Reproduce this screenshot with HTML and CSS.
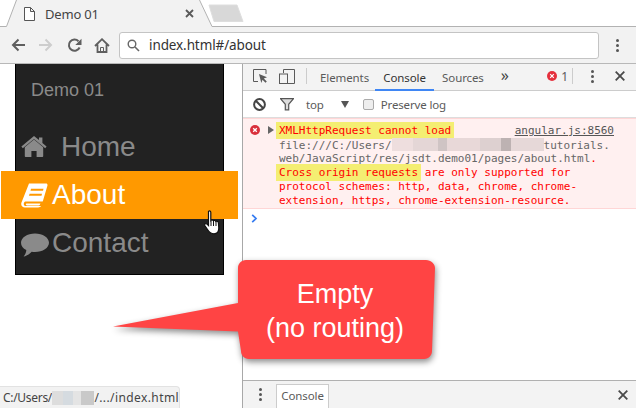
FILE: index.html
```html
<!DOCTYPE html>
<html lang="en">
<head>
<meta charset="utf-8">
<title>Demo 01</title>
<link rel="stylesheet" href="styles.css">
</head>
<body>
<div class="app">
  <header class="tabstrip">
    <svg class="tabshape" width="636" height="27" viewBox="0 0 636 27">
      <path d="M0 26.5H6.5L16.5 0H199.5L212 26.5H636V27H0Z" fill="#f2f2f2"/>
      <path d="M0 26.5H6.5L16.5 0M199.5 0L212 26.5H636" fill="none" stroke="#b2b2b2"/>
      <path d="M209 5H237L243 21.5H214Z" fill="#d8d8d8" stroke="#dedede"/>
    </svg>
    <div class="tab">
      <svg width="11" height="14" viewBox="0 0 11 14"><path d="M.5.5H6.5L10.5 4.5V13.5H.5ZM6.5.5V4.5H10.5" fill="#fff" stroke="#555"/></svg>
      <span class="tab-title">Demo 01</span>
      <svg class="tab-close" width="9" height="9" viewBox="0 0 9 9"><path d="M1 1L8 8M8 1L1 8" stroke="#5a5a5a" stroke-width="1.8"/></svg>
    </div>
  </header>
  <nav class="toolbar">
    <svg width="14" height="14" viewBox="0 0 14 14"><path d="M14 7H2M7.5 1.5L2 7L7.5 12.5" fill="none" stroke="#5f5f5f" stroke-width="2"/></svg>
    <svg width="14" height="14" viewBox="0 0 14 14"><path d="M0 7H12M6.5 1.5L12 7L6.5 12.5" fill="none" stroke="#cdcdcd" stroke-width="2"/></svg>
    <svg width="15" height="15" viewBox="0 0 15 15"><path d="M12.6 9.5A5.6 5.6 0 1 1 11.5 3.2" fill="none" stroke="#5f5f5f" stroke-width="2"/><path d="M14.5 .8V7H8.3Z" fill="#5f5f5f"/></svg>
    <svg class="ic-home" width="16" height="15" viewBox="0 0 16 15"><path d="M1 8L8 1.2L15 8M3.5 6.5V14H12.5V6.5" fill="none" stroke="#5f5f5f" stroke-width="1.8"/><path d="M6.5 14V9.5H9.5V14" fill="none" stroke="#5f5f5f" stroke-width="1"/></svg>
    <div class="omnibox">
      <svg width="13" height="13" viewBox="0 0 13 13"><circle cx="5" cy="5" r="3.8" fill="none" stroke="#666" stroke-width="1.4"/><path d="M8 8L12 12" stroke="#666" stroke-width="1.6"/></svg>
      <span>index.html#/about</span>
    </div>
    <div class="dots dots-menu"><i></i><i></i><i></i></div>
  </nav>
  <div class="stage">
    <main class="viewport">
      <div class="sidebar">
        <div class="brand">Demo 01</div>
        <a class="nav-item nav-home">
          <svg width="26" height="22" viewBox="0 0 26 22"><path fill="currentColor" d="M13 3.6L3.8 11.2V20C3.8 20.6 4.2 21 4.8 21H10.400V15H15.600V21H21.200C21.800 21 22.200 20.600 22.200 20V11.200ZM13 0L.4 10.400L1.800 12.200L13 3L24.200 12.200L25.600 10.400L21.400 6.900V1.400H18V4.100Z"/></svg>
          <span>Home</span>
        </a>
        <a class="nav-item nav-active">
          <svg width="27" height="25" viewBox="0 0 27 25"><path fill="currentColor" d="M8 .5H25C26.200 .5 26.800 1.500 26.400 2.700L20.800 21.800C20.200 23.600 18.800 24.600 17 24.600H4C1.500 24.600 -.4 22.500 .4 19.800Z"/><path fill="#ff9900" d="M3 19.800C3.400 18.900 4 18.600 5 18.600H23L22.400 20.600H6C5 20.600 4.600 21.200 5 21.800C5.200 22.200 5.600 22.400 6 22.400H17.500C18.300 22.400 18.800 22 19 21.500L19.400 20.600H22.400L21.800 22.400C21.600 23 21 23 20 23H4C3 23 2.400 21 3 19.800ZM10 5.800H22.500L22 7.800H9.500ZM8.600 10.800H21L20.500 12.800H8Z"/></svg>
          <span>About</span>
        </a>
        <a class="nav-item nav-contact">
          <svg width="28" height="24" viewBox="0 0 29 24"><path fill="currentColor" d="M14.500 0C22.500 0 29 4.300 29 9.600S22.500 19.200 14.500 19.200C13.300 19.200 12.200 19.100 11.100 18.900C8.800 21.400 6 23.300 2.700 24C4.500 21.800 5.400 19.600 5.500 17.300C2.100 15.500 0 12.700 0 9.600C0 4.300 6.500 0 14.500 0Z"/></svg>
          <span>Contact</span>
        </a>
      </div>
    </main>
    <section class="devtools">
      <div class="dt-tabs">
        <svg class="ic-inspect" width="15" height="14" viewBox="0 0 15 14"><path d="M5 12.500H.5V.5H13V5" fill="none" stroke="#5a5a5a"/><path d="M6 5L14 8.300L10.800 9.500L13.800 12.500L12.500 13.800L9.500 10.800L8.300 14Z" fill="#5a5a5a"/></svg>
        <svg class="ic-device" width="16" height="15" viewBox="0 0 16 15"><path d="M4.500 4V.5H15.500V14.500H9" fill="none" stroke="#5a5a5a"/><rect x=".5" y="5" width="8" height="9.500" fill="none" stroke="#5a5a5a"/></svg>
        <span class="vsep sep-a"></span>
        <span class="dt-tab dt-tab-first">Elements</span>
        <span class="dt-tab dt-tab-on">Console</span>
        <span class="dt-tab">Sources</span>
        <span class="more">»</span>
        <span class="err-count">
          <svg width="10" height="10" viewBox="0 0 10 10"><circle cx="5" cy="5" r="5" fill="#e5303d"/><path d="M3.200 3.200L6.800 6.800M6.800 3.200L3.200 6.800" stroke="#fff" stroke-width="1.200"/></svg>
          <span>1</span>
        </span>
        <span class="vsep sep-b"></span>
        <div class="dots dots-dt"><i></i><i></i><i></i></div>
        <svg class="dt-close" width="10" height="10" viewBox="0 0 10 10"><path d="M.7.700L9.300 9.300M9.300.700L.7 9.300" stroke="#4a4a4a" stroke-width="1.800"/></svg>
      </div>
      <div class="dt-filter">
        <svg width="13" height="13" viewBox="0 0 13 13"><circle cx="6.500" cy="6.500" r="5.400" fill="none" stroke="#444" stroke-width="2"/><path d="M2.800 2.800L10.200 10.200" stroke="#444" stroke-width="2"/></svg>
        <svg class="ic-funnel" width="14" height="13" viewBox="0 0 14 13"><path d="M.5.700H13.500L8.700 6.300V11.800L5.300 11.800V6.300Z" fill="#dcdcdc" stroke="#555" stroke-width="1.200"/></svg>
        <span class="ctx">top</span>
        <svg class="ctx-arrow" width="8" height="7" viewBox="0 0 8 7"><path d="M0 0H8L4 7Z" fill="#555"/></svg>
        <span class="check"></span>
        <span class="ctx">Preserve log</span>
      </div>
      <div class="dt-message">
        <svg class="msg-err" width="10" height="10" viewBox="0 0 10 10"><circle cx="5" cy="5" r="5" fill="#d9303c"/><path d="M3.200 3.200L6.800 6.800M6.800 3.200L3.200 6.800" stroke="#fff" stroke-width="1.300"/></svg>
        <svg class="msg-tri" width="6" height="8" viewBox="0 0 6 8"><path d="M0 0L6 4L0 8Z" fill="#666"/></svg>
        <a class="msg-src">angular.js:8560</a>
        <div class="msg-line"><mark>XMLHttpRequest cannot load</mark></div>
        <div class="msg-line msg-gray">file:///C:/Users/<span class="redact"></span>tutorials.</div>
        <div class="msg-line msg-gray">web/JavaScript/res/jsdt.demo01/pages/about.html<b>.</b></div>
        <div class="msg-line"><mark>Cross origin requests</mark> are only supported for</div>
        <div class="msg-line">protocol schemes: http, data, chrome, chrome-</div>
        <div class="msg-line">extension, https, chrome-extension-resource.</div>
      </div>
      <div class="dt-prompt">
        <svg width="7" height="9" viewBox="0 0 7 9"><path d="M1.200.8L5 4.500L1.200 8.200" fill="none" stroke="#367cf1" stroke-width="1.700"/></svg>
      </div>
      <div class="dt-drawer">
        <div class="dots dots-drawer"><i></i><i></i><i></i></div>
        <span class="drawer-tab">Console</span>
        <svg class="dt-close" width="10" height="10" viewBox="0 0 10 10"><path d="M.7.700L9.300 9.300M9.300.700L.7 9.300" stroke="#4a4a4a" stroke-width="1.800"/></svg>
      </div>
    </section>
    <svg class="cursor" width="18" height="25" viewBox="0 0 18 25"><path d="M4.500 1.500C5.500 .5 6.800 1 6.800 2.500V10.500C7.500 9.800 8.800 9.800 9.400 10.800C10.200 10.200 11.400 10.400 11.800 11.400C12.800 10.900 14.300 11.300 14.400 12.800L14.800 18C14.800 21 13.500 23.800 10 23.800C6.500 23.800 5 22 3.500 19.500L.8 15.500C.2 14 1.800 13 3 14L4.500 15.500Z" fill="#fff" stroke="#111" stroke-width="1.200"/><path d="M7 11V16M9.500 11V16M12 11.500V16" stroke="#111"/></svg>
    <div class="callout">
      <svg class="callout-shape" width="330" height="112" viewBox="0 0 330 112"><path fill="#ff4444" d="M0 66.500L125 43V8C125 4 128 0 133 0H313C318 0 322 4 322 8L319 91C319 95 316 99 311 99H136C131 99 128 95 128 91L125 71.500Z"/></svg>
      <p class="callout-text">Empty<br>(no routing)</p>
    </div>
    <div class="status">C:/Users/<span class="redact redact-status"></span><span class="status-tail">/.../index.html</span></div>
  </div>
</div>
</body>
</html>
```

FILE: styles.css
```css
* { box-sizing: border-box; }
html, body { margin: 0; width: 636px; height: 408px; overflow: hidden; background: #fff; }
body { font-family: "Open Sans", "Liberation Sans", sans-serif; color: #333; }
.app { display: flex; flex-direction: column; width: 636px; height: 408px; }

.tabstrip { position: relative; height: 27px; flex: none; }
.tabshape { position: absolute; left: 0; top: 0; }
.tab { position: relative; display: flex; align-items: center; height: 26px; padding: 1px 0 0 24px; width: 200px; }
.tab-title { margin-left: 10px; font-size: 13px; letter-spacing: -.2px; color: #444; font-family: "Noto Sans", sans-serif; }
.tab-close { margin-left: auto; margin-right: 6px; }

.toolbar { display: flex; align-items: center; height: 37px; flex: none; padding-left: 11px; background: #f2f2f2; border-bottom: 1px solid #b8b8b8; gap: 14px; }
.ic-home { margin-left: -2px; }
.omnibox { display: flex; align-items: center; gap: 9px; width: 480px; height: 27px; margin-left: -5px; padding-left: 7px; background: #fff; border: 1px solid #c4c4c4; border-radius: 3px; font-size: 13.5px; color: #333; font-family: "Noto Sans", sans-serif; letter-spacing: -.1px; }
.dots { display: flex; flex-direction: column; gap: 2px; width: 3px; }
.dots i { display: block; width: 3px; height: 3px; border-radius: 50%; background: #555; }
.dots-menu { margin-left: 3px; }

.stage { position: relative; display: flex; flex: 1; min-height: 0; }
.viewport { width: 242px; flex: none; padding-left: 15px; }
.sidebar { width: 209px; height: 211px; background: #222; border: 1px solid #000; border-top: 0; font-family: "Liberation Sans", Arial, sans-serif; }
.brand { height: 59px; padding: 16px 0 0 15px; font-size: 18px; line-height: 20px; color: #8a8a8a; }
.nav-item { display: flex; align-items: center; height: 48px; font-size: 28px; color: #8a8a8a; }
.nav-home { padding-left: 5px; gap: 14px; }
.nav-active { margin: 0 -15px; padding-left: 20px; gap: 4px; background: #ff9900; color: #fff; position: relative; }
.nav-contact { padding-left: 5px; gap: 3px; padding-bottom: 1px; }
.nav-contact svg { margin-top: 5px; }

.devtools { display: flex; flex-direction: column; flex: 1; min-width: 0; border-left: 1px solid #a8a8a8; font-size: 11.5px; color: #5a5a5a; font-family: "Noto Sans", sans-serif; }
.dt-tabs { display: flex; align-items: center; height: 27px; flex: none; padding: 0 11px 2px 10px; background: #f3f3f3; border-bottom: 1px solid #ccc; position: relative; }
.ic-device { margin-left: 11px; }
.vsep { width: 1px; height: 16px; background: #ccc; }
.sep-a { margin-left: 11px; margin-right: 5px; }
.dt-tab { padding: 0 8px; height: 25px; line-height: 25px; margin-top: 2px; margin-right: 0; letter-spacing: -.1px; }
.dt-tab-first { margin-right: -2px; }
.dt-tab-on { color: #333; width: 59px; text-align: center; border-bottom: 2px solid #3f86f4; margin-top: 1px; line-height: 25px; height: 26px; margin-bottom: -2px; padding: 0; }
.more { margin-left: 9px; font-size: 16px; line-height: 16px; color: #444; margin-top: -3px; }
.err-count { display: flex; align-items: center; gap: 4px; margin-left: auto; font-size: 12px; }
.sep-b { margin-left: 4px; }
.dots-dt { margin-left: 18px; }
.dots-dt + .dt-close { margin-left: 21px; }

.dt-filter { display: flex; align-items: center; height: 27px; flex: none; padding-left: 10px; border-bottom: 1px solid #ddd; }
.ic-funnel { margin-left: 14px; }
.ctx { margin-left: 12px; letter-spacing: -.15px; }
.ctx-arrow { margin-left: 17px; }
.check { width: 11px; height: 11px; margin-left: 14px; border: 1px solid #aaa; border-radius: 2px; background: #eee; }
.check + .ctx { margin-left: 7px; }

.dt-message { position: relative; flex: none; height: 91px; padding: 5px 0 0 36px; background: #fff0f0; border-top: 1px solid #ffd6d6; border-bottom: 1px solid #ffd6d6; font-family: "DejaVu Sans Mono", monospace; font-size: 11px; line-height: 14px; color: #f00; }
.msg-err { position: absolute; left: 7px; top: 6px; }
.msg-tri { position: absolute; left: 25px; top: 7px; }
.msg-src { position: absolute; right: 22px; top: 5px; color: #555; text-decoration: underline; }
.msg-line { height: 14px; white-space: pre; }
.msg-gray { color: #666; }
.msg-gray b { color: #f00; font-weight: normal; }
mark { background: #f4ee72; color: #f00; padding: 2px 3px; margin: 0 -3px; }
.redact { display: inline-block; width: 152px; height: 13px; vertical-align: -2px; background: linear-gradient(90deg, #eedede 0 14%, #e4d6d6 14% 30%, #cfc4c4 30% 36%, #e8d8d8 36% 58%, #ddd0d0 58% 72%, #bdb2b2 72% 78%, #e6d8d8 78% 100%); }
.dt-prompt { flex: 1; padding: 5px 0 0 8px; line-height: 0; }

.dt-drawer { display: flex; align-items: flex-end; height: 28px; flex: none; padding-left: 16px; background: #f3f3f3; border-top: 1px solid #b0b0b0; }
.dots-drawer { align-self: center; }
.drawer-tab { width: 53px; height: 24px; line-height: 22px; margin-left: 14px; text-align: center; background: #fff; border: 1px solid #ccc; border-bottom: 0; letter-spacing: -.1px; }
.dt-drawer .dt-close { margin: 0 0 8px 289px; }

.cursor { position: absolute; left: 204px; top: 146px; }
.callout { position: absolute; left: 113px; top: 196px; width: 322px; height: 100px; }
.callout-shape { position: absolute; left: 0; top: 0; overflow: visible; filter: drop-shadow(1px 3px 3px rgba(0, 0, 0, .45)); }
.callout-text { position: absolute; left: 125px; top: 17px; width: 194px; margin: 0; text-align: center; font-family: "Liberation Sans", Arial, sans-serif; font-size: 27px; line-height: 34px; color: #fff; }

.status { position: absolute; left: 0; bottom: 0; display: flex; align-items: center; width: 180px; height: 22px; padding-left: 3px; background: #f2f2f2; border: 1px solid #e2e2e2; border-left: 0; border-bottom: 0; border-top-right-radius: 4px; font-size: 12px; letter-spacing: -.3px; color: #444; font-family: "Noto Sans", sans-serif; white-space: pre; }
.status-tail { letter-spacing: .4px; }
.redact-status { width: 52px; height: 14px; background: linear-gradient(90deg, #ddd 0 25%, #d5dbe0 25% 50%, #e4e4e4 50% 70%, #c9c9c9 70% 100%); }
```
